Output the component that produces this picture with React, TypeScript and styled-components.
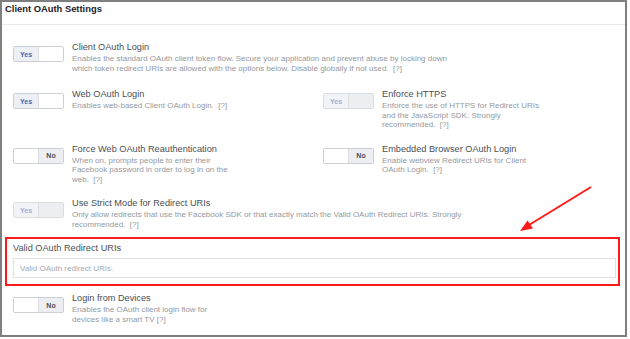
import React from "react";
import styled, { createGlobalStyle } from "styled-components";

const GlobalStyle = createGlobalStyle`
  body {
    margin: 0;
    background: #fff;
    font-family: "Liberation Sans", Arial, sans-serif;
  }
`;

const Frame = styled.section`
  position: relative;
  width: 627px;
  height: 337px;
  box-sizing: border-box;
  border: 2px solid #7f7f7f;
  background: #fff;
`;

const Header = styled.h2`
  margin: 0;
  height: 22px;
  padding: 0 3px;
  line-height: 14px;
  font-size: 9.4px;
  font-weight: 700;
  color: #1d2129;
  border-bottom: 1px solid #e9eaed;
`;

const Body = styled.div`
  padding: 16px 11px 0;
`;

const Row = styled.div<{ $mt?: number }>`
  display: flex;
  gap: 8px;
  align-items: flex-start;
  margin-top: ${(p) => p.$mt ?? 0}px;
`;

const Columns = styled.div<{ $mt?: number }>`
  display: grid;
  grid-template-columns: 310px 1fr;
  margin-top: ${(p) => p.$mt ?? 0}px;
`;

const ToggleBox = styled.div<{ $disabled?: boolean }>`
  display: flex;
  flex-shrink: 0;
  width: 51px;
  height: 16px;
  margin-top: 5px;
  box-sizing: border-box;
  border: 1px solid ${(p) => (p.$disabled ? "#dadde1" : "#ccd0d5")};
  border-radius: 2px;
  overflow: hidden;
`;

const Segment = styled.span<{ $shade: "on" | "off" | "faded" | "blank" }>`
  display: flex;
  align-items: center;
  justify-content: center;
  font-size: 7px;
  font-weight: 700;
  background: ${(p) =>
    p.$shade === "on"
      ? "#eceff3"
      : p.$shade === "off"
      ? "#eceef1"
      : p.$shade === "faded"
      ? "#f1f3f6"
      : "#fff"};
  color: ${(p) =>
    p.$shade === "on" ? "#4267b2" : p.$shade === "faded" ? "#9cb0d6" : "#4b4f56"};
  & + & {
    border-left: 1px solid #dddfe2;
  }
  &:first-child {
    width: 24px;
  }
  &:last-child {
    flex: 1;
  }
`;

const Text = styled.div``;

const Title = styled.div`
  font-size: 9.2px;
  line-height: 13px;
  color: #4b4f56;
`;

const Desc = styled.div<{ $wide?: boolean }>`
  font-size: 8px;
  line-height: 9.5px;
  color: #949aa2;
  max-width: ${(p) => (p.$wide ? 440 : 161)}px;
`;

const Highlight = styled.div`
  margin: 8px -6px 0 -8px;
  border: 2px solid #ff1a1a;
  padding: 3px 2px 6px 6px;
`;

const FieldLabel = styled.label`
  display: block;
  font-size: 9.2px;
  line-height: 13px;
  color: #4b4f56;
`;

const UriInput = styled.input`
  display: block;
  width: 100%;
  height: 20px;
  margin-top: 3px;
  box-sizing: border-box;
  border: 1px solid #dddfe2;
  padding: 0 6px;
  font-family: inherit;
  font-size: 8px;
  outline: none;
  &::placeholder {
    color: #a6aab0;
  }
`;

const Arrow = styled.svg`
  position: absolute;
  left: 514px;
  top: 181px;
  pointer-events: none;
`;

type ToggleProps = { on?: boolean; disabled?: boolean };

function Toggle({ on, disabled }: ToggleProps) {
  if (on) {
    return (
      <ToggleBox $disabled={disabled}>
        <Segment $shade={disabled ? "faded" : "on"}>Yes</Segment>
        <Segment $shade={disabled ? "off" : "blank"} />
      </ToggleBox>
    );
  }
  return (
    <ToggleBox>
      <Segment $shade="blank" />
      <Segment $shade="off">No</Segment>
    </ToggleBox>
  );
}

type SettingProps = ToggleProps & {
  title: string;
  desc: React.ReactNode;
  wide?: boolean;
  mt?: number;
};

function Setting({ title, desc, wide, mt, on, disabled }: SettingProps) {
  return (
    <Row $mt={mt}>
      <Toggle on={on} disabled={disabled} />
      <Text>
        <Title>{title}</Title>
        <Desc $wide={wide}>{desc}</Desc>
      </Text>
    </Row>
  );
}

export default function App() {
  return (
    <>
      <GlobalStyle />
      <Frame>
        <Header>Client OAuth Settings</Header>
        <Body>
          <Setting
            on
            wide
            title="Client OAuth Login"
            desc={
              <>
                Enables the standard OAuth client token flow. Secure your application and prevent abuse by locking down
                <br />
                which token redirect URIs are allowed with the options below. Disable globally if not used.{"\u00a0 "}[?]
              </>
            }
          />
          <Columns $mt={15}>
            <Setting
              on
              title="Web OAuth Login"
              desc={"Enables web-based Client OAuth Login.\u00a0 [?]"}
            />
            <Setting
              on
              disabled
              title="Enforce HTTPS"
              desc={"Enforce the use of HTTPS for Redirect URIs and the JavaScript SDK. Strongly recommended.\u00a0 [?]"}
            />
          </Columns>
          <Columns $mt={13}>
            <Setting
              title="Force Web OAuth Reauthentication"
              desc={"When on, prompts people to enter their Facebook password in order to log in on the web.\u00a0 [?]"}
            />
            <Setting
              title="Embedded Browser OAuth Login"
              desc={"Enable webview Redirect URIs for Client OAuth Login.\u00a0 [?]"}
            />
          </Columns>
          <Setting
            on
            disabled
            wide
            mt={13}
            title="Use Strict Mode for Redirect URIs"
            desc={
              <>
                Only allow redirects that use the Facebook SDK or that exactly match the Valid OAuth Redirect URIs. Strongly
                <br />
                recommended.{"\u00a0 "}[?]
              </>
            }
          />
          <Highlight>
            <FieldLabel htmlFor="redirect-uris">Valid OAuth Redirect URIs</FieldLabel>
            <UriInput id="redirect-uris" placeholder="Valid OAuth redirect URIs." />
          </Highlight>
          <Setting
            mt={6}
            title="Login from Devices"
            desc="Enables the OAuth client login flow for devices like a smart TV [?]"
          />
        </Body>
        <Arrow width="78" height="52" viewBox="0 0 78 52">
          <line x1="75" y1="4" x2="13" y2="42" stroke="#ff1a1a" strokeWidth="2" />
          <polygon points="4,48 11.5,37.5 17,45.5" fill="#ff1a1a" />
        </Arrow>
      </Frame>
    </>
  );
}
